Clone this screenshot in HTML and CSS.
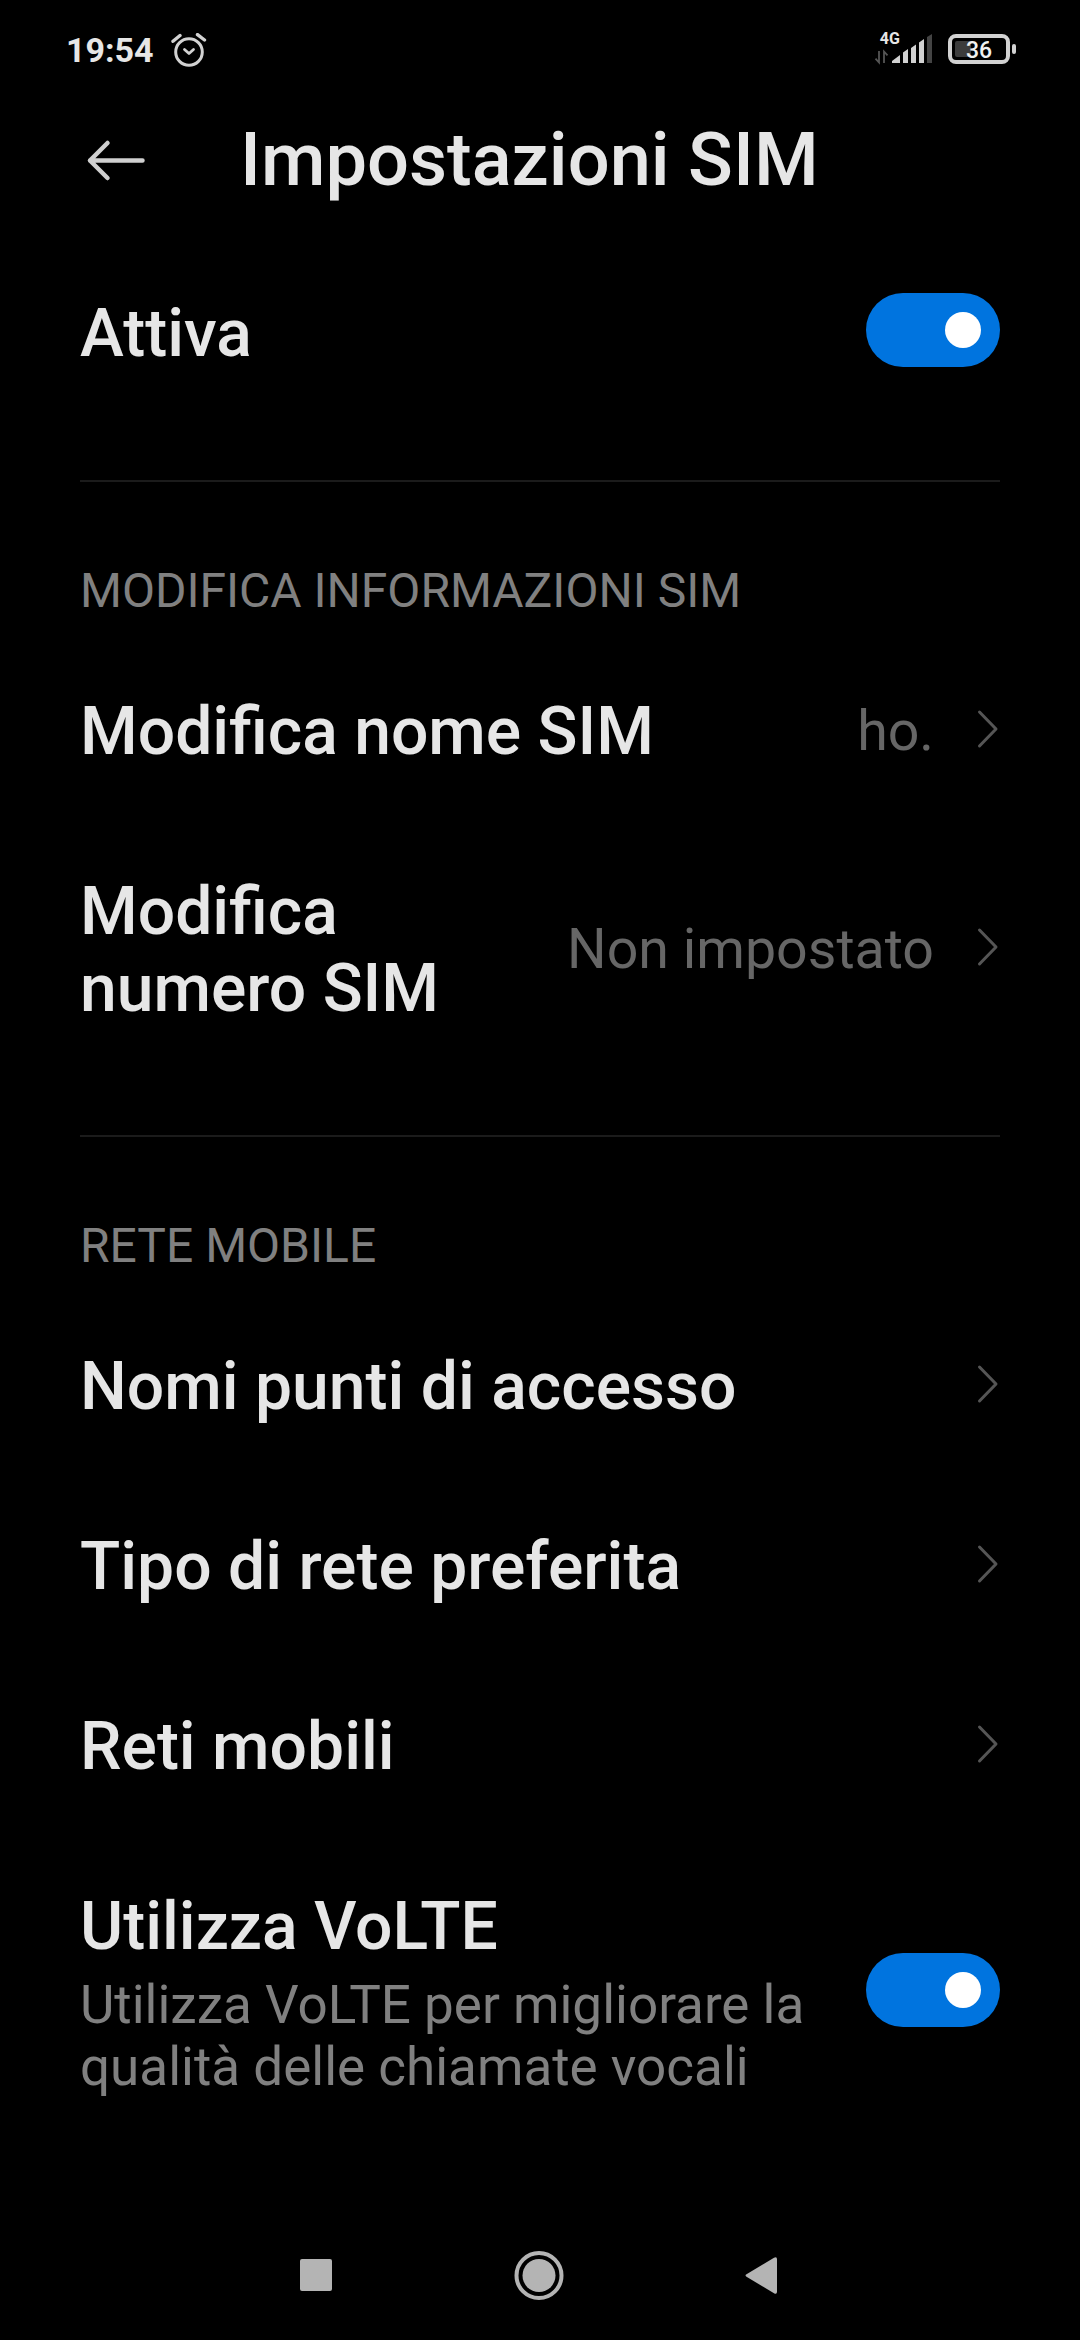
FILE: index.html
```html
<!DOCTYPE html>
<html lang="it">
<head>
  <meta charset="UTF-8">
  <meta name="viewport" content="width=device-width, initial-scale=1.0">
  <title>Impostazioni SIM</title>
  <link rel="stylesheet" href="styles.css">
</head>
<body>
  <div class="status-bar">
    <span class="time">19:54</span>
    <svg class="alarm" width="36" height="36" viewBox="171 33 36 36" fill="none" stroke="#d2d2d2" stroke-linecap="round" stroke-linejoin="round">
      <circle cx="189" cy="52" r="13.3" stroke-width="3"/>
      <path d="M184.500 49.500l4.500 4 4.500-4" stroke-width="2.8"/>
      <path d="M173 41.300l7-5.800M204.500 40l-7-5.400" stroke-width="3.4"/>
    </svg>
    <svg class="signal" width="60" height="40" viewBox="874 26 60 40">
      <text class="network" x="879.8" y="44">4G</text>
      <path d="M879 51v11.500l-3.500-3.800M884 63V51.500l3.500 3.800" fill="none" stroke="#555" stroke-width="1.8"/>
      <path d="M892 63v-2l8-6v8zM903 63V52.500l5-3.500v14zM911 63V48l5-3.500v18.500zM919 63V42.500l5-3.500v24z" fill="#d2d2d2"/>
      <path d="M927 63V37l5-3v29z" fill="#444"/>
    </svg>
    <svg class="battery" width="70" height="32" viewBox="947 33 70 32">
      <rect x="950" y="36" width="58" height="26" rx="6" fill="none" stroke="#d2d2d2" stroke-width="4"/>
      <rect x="955" y="41" width="16" height="16" rx="2" fill="#3c3c3c"/>
      <rect x="1012" y="44" width="4" height="10" rx="2" fill="#d2d2d2"/>
      <text class="percent" x="979" y="57.500">36</text>
    </svg>
  </div>

  <header class="title-bar">
    <svg class="back" width="60" height="44" viewBox="86 139 60 44" fill="none" stroke="#d0d0d0" stroke-width="4.5" stroke-linecap="round" stroke-linejoin="round">
      <path d="M142.500 160.500H90M107.500 143L90 160.500l17.500 17.500"/>
    </svg>
    <h1>Impostazioni SIM</h1>
  </header>

  <main>
    <section>
      <div class="row">
        <div class="label">Attiva</div>
        <div class="toggle"><span class="knob"></span></div>
      </div>
    </section>

    <section>
      <h2>MODIFICA INFORMAZIONI SIM</h2>
      <div class="row">
        <div class="label">Modifica nome SIM</div>
        <div class="value">ho.</div>
        <svg class="chevron" width="24" height="40" viewBox="0 0 24 40"><path d="M3.500 3L20 20 3.500 37"/></svg>
      </div>
      <div class="row">
        <div class="label">Modifica numero SIM</div>
        <div class="value">Non impostato</div>
        <svg class="chevron" width="24" height="40" viewBox="0 0 24 40"><path d="M3.500 3L20 20 3.500 37"/></svg>
      </div>
    </section>

    <section>
      <h2>RETE MOBILE</h2>
      <div class="row">
        <div class="label">Nomi punti di accesso</div>
        <svg class="chevron" width="24" height="40" viewBox="0 0 24 40"><path d="M3.500 3L20 20 3.500 37"/></svg>
      </div>
      <div class="row">
        <div class="label">Tipo di rete preferita</div>
        <svg class="chevron" width="24" height="40" viewBox="0 0 24 40"><path d="M3.500 3L20 20 3.500 37"/></svg>
      </div>
      <div class="row">
        <div class="label">Reti mobili</div>
        <svg class="chevron" width="24" height="40" viewBox="0 0 24 40"><path d="M3.500 3L20 20 3.500 37"/></svg>
      </div>
      <div class="row">
        <div class="label">
          Utilizza VoLTE
          <p class="summary">Utilizza VoLTE per migliorare la qualità delle chiamate vocali</p>
        </div>
        <div class="toggle"><span class="knob"></span></div>
      </div>
    </section>
  </main>

  <nav class="nav-bar">
    <svg width="50" height="50" viewBox="0 0 50 50"><rect x="9" y="9" width="32" height="32" rx="2"/></svg>
    <svg width="50" height="50" viewBox="0 0 50 50">
      <circle cx="25" cy="25.500" r="22.500" fill="none" stroke="#b4b4b4" stroke-width="4"/>
      <circle cx="25" cy="25.500" r="16.500"/>
    </svg>
    <svg width="50" height="50" viewBox="0 0 50 50"><path d="M10.500 24.300L38 7.800q3-1.500 3 1.500v32.400q0 3-3 1.500L10.500 26.700q-2-1.200 0-2.400z"/></svg>
  </nav>
</body>
</html>
```

FILE: styles.css
```css
* {
  box-sizing: border-box;
}
body {
  margin: 0;
  height: 2340px;
  display: flex;
  flex-direction: column;
  background-color: #000;
  color: #e6e6e6;
  font-family: Roboto, "Noto Sans", sans-serif;
  overflow: hidden;
}
h1, h2, p {
  margin: 0;
}
.status-bar {
  height: 100px;
  padding: 0 63px 0 66px;
  display: flex;
  align-items: flex-start;
}
.time {
  margin-top: 30px;
  width: 105px;
  line-height: 40px;
  font-size: 34px;
  font-weight: 700;
}
.alarm {
  margin-top: 33px;
}
.signal {
  margin-top: 26px;
  margin-left: auto;
  overflow: visible;
}
.battery {
  margin-top: 33px;
  margin-left: 13px;
}
.network {
  font-size: 16px;
  font-weight: 700;
  fill: #e6e6e6;
}
.percent {
  font-size: 23px;
  font-weight: 500;
  fill: #f0f0f0;
  text-anchor: middle;
}
.title-bar {
  height: 143px;
  padding: 16px 80px 0 86px;
  display: flex;
  align-items: flex-start;
}
.back {
  margin-top: 23px;
  margin-right: 94px;
}
h1 {
  font-size: 74px;
  line-height: 87px;
  font-weight: 500;
}
main {
  flex: 1;
  padding: 0 80px;
}
section + section {
  margin-top: 57px;
  border-top: 2px solid #1b1b1b;
}
h2 {
  margin-top: 81px;
  margin-bottom: 22px;
  font-size: 48px;
  line-height: 56px;
  font-weight: 400;
  color: #808080;
}
.row {
  display: flex;
  align-items: center;
  padding: 52px 0 51px;
}
.label {
  flex: 1;
  font-size: 66px;
  line-height: 77px;
  font-weight: 500;
}
.value {
  margin-left: 40px;
  font-size: 55.5px;
  line-height: 64px;
  color: #666;
}
.chevron {
  margin-left: 42px;
  margin-bottom: 6px;
  fill: none;
  stroke: #555;
  stroke-width: 3;
  stroke-linecap: round;
  stroke-linejoin: round;
}
.summary {
  margin-top: 9px;
  font-size: 53px;
  line-height: 62px;
  font-weight: 400;
  color: #808080;
}
.toggle {
  width: 134px;
  height: 74px;
  margin-top: -7px;
  margin-left: 50px;
  padding-right: 19px;
  display: flex;
  align-items: center;
  justify-content: flex-end;
  border-radius: 37px;
  background-color: #0074df;
}
.knob {
  width: 36px;
  height: 36px;
  border-radius: 50%;
  background-color: #fff;
}
.nav-bar {
  height: 130px;
  padding: 0 294px 0 291px;
  display: flex;
  align-items: center;
  justify-content: space-between;
  fill: #b4b4b4;
}
```
